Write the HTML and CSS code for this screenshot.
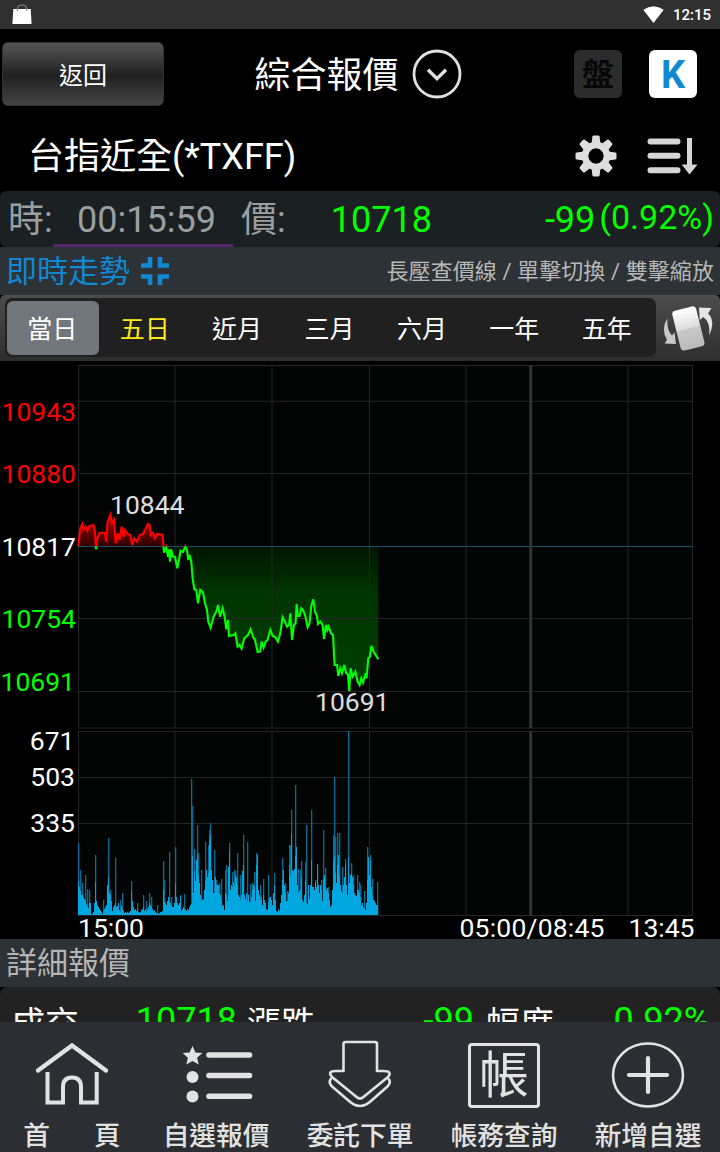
FILE: index.html
```html
<!DOCTYPE html>
<html lang="zh-Hant">
<head>
    <meta charset="UTF-8">
    <meta name="viewport" content="width=device-width, initial-scale=1.0">
    <title>綜合報價</title>
    <link rel="stylesheet" href="styles.css">
</head>
<body>
    <div class="status-bar">
        <svg width="20" height="21" viewBox="0 0 20 21"><path d="M1.300 5h17.400l.9 15H.4z" fill="#fff"/><path d="M5.300 7V4.500Q6 1 10 1t4.700 3.500V7" fill="none" stroke="#888" stroke-width="1.100"/></svg>
        <div class="status-right">
            <svg width="21" height="17" viewBox="0 0 21 17"><path d="M.3 3.700Q10.500-3.400 20.700 3.700L10.500 17z" fill="#fff"/></svg>
            <span>12:15</span>
        </div>
    </div>

    <header class="header">
        <button class="back-button">返回</button>
        <div class="page-title">
            <span>綜合報價</span>
            <svg width="50" height="50" viewBox="0 0 50 50" fill="none" stroke="#e0e0e0"><circle cx="25" cy="25" r="23" stroke-width="2.800"/><path d="M16 20.700l9 9 9-9" stroke-width="3.400"/></svg>
        </div>
        <div class="header-icons">
            <span class="badge badge-off">盤</span>
            <span class="badge badge-k">K</span>
        </div>
    </header>

    <div class="symbol-row">
        <span class="symbol-name">台指近全(*TXFF)</span>
        <div class="symbol-icons">
            <svg width="42" height="42" viewBox="-21 -21 42 42" fill="#dedede">
                <g id="gear-teeth">
                    <path id="tooth" d="M-4.500-12L-3.600-19.400Q-3.300-20.500-2-20.500H2Q3.300-20.500 3.600-19.400L4.500-12z"/>
                    <use href="#tooth" transform="rotate(45)"/>
                    <use href="#tooth" transform="rotate(90)"/>
                    <use href="#tooth" transform="rotate(135)"/>
                    <use href="#tooth" transform="rotate(180)"/>
                    <use href="#tooth" transform="rotate(225)"/>
                    <use href="#tooth" transform="rotate(270)"/>
                    <use href="#tooth" transform="rotate(315)"/>
                </g>
                <circle r="10.800" fill="none" stroke="#dedede" stroke-width="6.800"/>
                <circle r="7.600" fill="#000"/>
            </svg>
            <svg width="51" height="38" viewBox="0 0 51 38"><path d="M3.500 4.400h27M3.500 18.800h27M3.500 33.200h27" stroke="#d6d6d6" stroke-width="6" stroke-linecap="round"/><path d="M40 1h5v26.500h5.500L42.500 37.500 34.700 27.500H40z" fill="#d6d6d6"/></svg>
        </div>
    </div>

    <div class="quote-bar">
        <span class="quote-label">時:</span>
        <span class="quote-time">00:15:59</span>
        <span class="quote-label">價:</span>
        <span class="quote-price">10718</span>
        <span class="quote-change">-99</span>
        <span class="quote-percent">(0.92%)</span>
    </div>

    <div class="section-head">
        <span class="section-title section-title-blue">即時走勢</span>
        <svg class="shrink-icon" width="28" height="28" viewBox="0 0 28 28" fill="none" stroke="#1189d2" stroke-width="4.600"><path d="M9 0v8.500H0M19 0v8.500h9M9 28v-8.500H0M19 28v-8.500h9"/></svg>
        <span class="section-hint">長壓查價線 / 單擊切換 / 雙擊縮放</span>
    </div>

    <div class="tab-bar">
        <div class="tabs">
            <span class="tab tab-active">當日</span>
            <span class="tab tab-yellow">五日</span>
            <span class="tab">近月</span>
            <span class="tab">三月</span>
            <span class="tab">六月</span>
            <span class="tab">一年</span>
            <span class="tab">五年</span>
        </div>
        <svg class="rotate-icon" width="50" height="46" viewBox="0 0 50 46">
            <defs><linearGradient id="phone" x2="0" y2="1"><stop offset="0" stop-color="#fff"/><stop offset=".5" stop-color="#ddd"/><stop offset=".51" stop-color="#c8c8c8"/><stop offset="1" stop-color="#bbb"/></linearGradient></defs>
            <rect x="13" y="3" width="24.500" height="41" rx="3.500" fill="url(#phone)" transform="rotate(-14 25 23)"/>
            <path d="M4.500 13Q-2.500 24 4 35L1.500 38.500l11.500.5L11.500 27.500l-2.500 3Q3.500 25 4.500 13z" fill="#c8c8c8"/>
            <path d="M46 30.500q7-14.500-1-22l3.500-5.500L36 2.500l.8 12.500 3.500-3Q48 18 46 30.500z" fill="#e4e4e4"/>
        </svg>
    </div>

    <svg class="chart" id="chart" width="720" height="578" viewBox="0 361 720 578">
        <defs>
            <linearGradient id="up" gradientUnits="userSpaceOnUse" x1="0" y1="515" x2="0" y2="546"><stop offset="0" stop-color="#b00000"/><stop offset="1" stop-color="#300000"/></linearGradient>
            <linearGradient id="down" gradientUnits="userSpaceOnUse" x1="0" y1="546" x2="0" y2="690"><stop offset="0" stop-color="#001500"/><stop offset=".32" stop-color="#003400"/><stop offset="1" stop-color="#004000"/></linearGradient>
            <clipPath id="above"><rect x="77" y="365" width="615" height="181.500"/></clipPath>
            <clipPath id="below"><rect x="78" y="546.500" width="615" height="182"/></clipPath>
        </defs>
        <rect x="78" y="365" width="615" height="363" fill="#030504"/>
        <rect x="78" y="731" width="615" height="184" fill="#030504"/>
        <g id="fills"></g>
        <g class="grid">
            <path d="M78 365.500h615M78 401.300h615M78 473.500h615M78 618.500h615M78 691.500h615M78 728h615M78 731.500h615M78 777.500h615M78 823.500h615M78 915.500h615"/>
            <path d="M78.500 365v363M175 365v363M272 365v363M369.500 365v363M466 365v363M628 365v363M692.500 365v363"/>
            <path d="M78.500 731v184M175 731v184M272 731v184M369.500 731v184M466 731v184M628 731v184M692.500 731v184"/>
        </g>
        <path d="M78 546.500h615" stroke="#1c5066"/>
        <path d="M530.700 365v363M530.700 731v184" stroke="#333" stroke-width="3"/>
        <g id="lines"></g>
        <g id="volume"></g>
        <g class="axis-text" text-anchor="end">
            <text x="76" y="421" fill="#f00">10943</text>
            <text x="76" y="483" fill="#f00">10880</text>
            <text x="76" y="556">10817</text>
            <text x="76" y="628.400" fill="#0f0">10754</text>
            <text x="75" y="691.400" fill="#0f0">10691</text>
            <text x="74.500" y="750">671</text>
            <text x="75" y="786">503</text>
            <text x="75" y="832.400">335</text>
        </g>
        <g class="axis-text">
            <text x="110" y="514.400" fill="#ddd">10844</text>
            <text x="315" y="711.400" fill="#ddd">10691</text>
            <text x="78" y="937.400">15:00</text>
            <text x="459.500" y="937.400" textLength="145">05:00/08:45</text>
            <text x="628.500" y="937.400">13:45</text>
        </g>
    </svg>

    <div class="section-head detail-head">
        <span class="section-title">詳細報價</span>
    </div>
    <div class="detail">
        <div class="detail-row">
            <span class="detail-label">成交</span><span class="detail-value">10718</span>
            <span class="detail-label">漲跌</span><span class="detail-value">-99</span>
            <span class="detail-label">幅度</span><span class="detail-value">0.92%</span>
        </div>
    </div>

    <nav class="bottom-nav">
        <a class="nav-item">
            <svg width="76" height="72" viewBox="0 0 76 72" fill="none" stroke="#e2e2e2"><path d="M4 32.500L38 7.500 72 32.500" stroke-width="4.400" stroke-linecap="round"/><path d="M13.500 34v30.500h15.500V49q0-9.500 9-9.500t9 9.500v15.500H62.700V34" stroke-width="4"/></svg>
            <span class="nav-home">首頁</span>
        </a>
        <a class="nav-item">
            <svg width="76" height="72" viewBox="0 0 76 72" fill="#e2e2e2"><path d="M14.500 8l2.900 6.500 7 .6-5.300 4.600 1.600 6.800-6.200-3.600-6.200 3.600 1.600-6.800L4.600 15.100l7-.6z"/><circle cx="14.500" cy="39" r="6"/><circle cx="14.500" cy="58.500" r="6"/><path d="M31 17h40.500M31 37.500h40.500M31 58.300h40.500" stroke="#e2e2e2" stroke-width="5.600" stroke-linecap="round"/></svg>
            <span>自選報價</span>
        </a>
        <a class="nav-item">
            <svg width="76" height="72" viewBox="0 0 76 72" fill="none" stroke="#e2e2e2" stroke-width="2.600" stroke-linejoin="round"><path d="M21.500 33V6Q21.500 4 23.500 4H53q2 0 2 2V33h6q10 0 5 6L42 58.500q-4 4-8 0L10 39Q5 33 13.500 33z"/><path d="M9.500 40q-3.500 4 0 8L27 63q11 10 22 0L66 48q3.500-4 0-8"/></svg>
            <span>委託下單</span>
        </a>
        <a class="nav-item">
            <span class="account-icon">帳</span>
            <span>帳務查詢</span>
        </a>
        <a class="nav-item">
            <svg width="76" height="72" viewBox="0 0 76 72" fill="none" stroke="#e2e2e2"><ellipse cx="38" cy="37" rx="35" ry="31.500" stroke-width="2.600"/><path d="M19 37h38M38 20v34" stroke-width="4.200" stroke-linecap="round"/></svg>
            <span>新增自選</span>
        </a>
    </nav>
    <script src="chart.js"></script>
</body>
</html>
```
FILE: styles.css
```css
body {
    margin: 0;
    width: 720px;
    height: 1152px;
    overflow: hidden;
    display: flex;
    flex-direction: column;
    background-color: #000;
    color: #fff;
    font-family: Roboto, "Noto Sans CJK TC", sans-serif;
}
svg {
    display: block;
    flex: none;
}
.status-bar {
    height: 29px;
    flex: none;
    box-sizing: border-box;
    padding: 0 9px 0 12px;
    display: flex;
    align-items: center;
    justify-content: space-between;
    background-color: #303030;
}
.status-right {
    display: flex;
    align-items: center;
    gap: 9px;
    font-size: 15px;
    font-weight: 500;
}
.header {
    height: 92px;
    flex: none;
    display: grid;
    grid-template-columns: 252.5px 1fr 147px;
    padding: 0 0 0 2px;
    box-sizing: border-box;
}
.back-button {
    width: 162px;
    height: 64px;
    margin-top: 13px;
    padding: 0 0 1px;
    border: 1px solid #333;
    border-radius: 6px;
    background: linear-gradient(#555 0%, #3a3a3a 28%, #202020 52%, #444 100%);
    color: #fff;
    font-family: inherit;
    font-size: 24px;
}
.page-title {
    height: 90px;
    display: flex;
    align-items: center;
    gap: 13.5px;
    font-size: 36px;
}
.page-title span {
    padding-bottom: 4px;
}
.header-icons {
    display: flex;
    gap: 27px;
    padding-top: 21px;
    padding-left: 1px;
}
.badge {
    width: 48px;
    height: 48px;
    border-radius: 6px;
    display: flex;
    align-items: center;
    justify-content: center;
    font-weight: bold;
}
.badge-off {
    background-color: #2c2c2c;
    color: #080808;
    font-size: 32px;
    line-height: 50px;
    align-items: flex-start;
}
.badge-k {
    box-sizing: border-box;
    padding-top: 2px;
    background-color: #fff;
    color: #1189d2;
    font-size: 38px;
}
.symbol-row {
    height: 70px;
    flex: none;
    box-sizing: border-box;
    padding: 0 22px 0 28px;
    display: flex;
    align-items: center;
    justify-content: space-between;
    font-size: 36px;
}
.symbol-name {
    padding-bottom: 6px;
}
.symbol-icons {
    display: flex;
    align-items: center;
    gap: 30px;
}
.quote-bar {
    height: 56px;
    flex: none;
    display: flex;
    align-items: stretch;
    line-height: 58px;
    border-radius: 6px;
    background-color: #1b2023;
    font-size: 36px;
    color: #0f0;
    box-sizing: border-box;
    padding: 0 6px 0 8px;
}
.quote-label {
    width: 45px;
    color: #9a9fa2;
}
.quote-time {
    width: 180px;
    margin-right: 8px;
    box-sizing: border-box;
    padding-left: 7px;
    border-bottom: 3px solid #5c2468;
    text-align: center;
    color: #9a9fa2;
}
.quote-price {
    width: 146px;
    text-align: right;
}
.quote-change {
    flex: 1;
    text-align: right;
    margin-right: 4px;
}
.quote-percent {
    font-size: 34px;
    line-height: 53px;
}
.section-head {
    height: 48px;
    flex: none;
    box-sizing: border-box;
    padding: 0 6px;
    display: flex;
    align-items: center;
    background-color: #2d3236;
}
.section-title {
    padding-bottom: 5px;
    font-size: 31px;
    color: #b5b5b5;
}
.section-title-blue {
    color: #1189d2;
}
.shrink-icon {
    margin-left: 11px;
}
.section-hint {
    margin-left: auto;
    padding-bottom: 4px;
    font-size: 22px;
    letter-spacing: 0.08px;
    color: #b8b8b8;
}
.tab-bar {
    height: 66px;
    flex: none;
    box-sizing: border-box;
    padding: 3px 7px 4px 5px;
    display: flex;
    align-items: center;
    justify-content: space-between;
    border-radius: 5px 5px 0 0;
    background: linear-gradient(#4c4c4c, #2e2e2e);
}
.tabs {
    width: 651px;
    height: 59px;
    box-sizing: border-box;
    padding: 3px 2px 2px;
    display: flex;
    border-radius: 7px;
    background-color: #202020;
}
.tab {
    flex: 1;
    box-sizing: border-box;
    padding: 0 2px 3px 0;
    display: flex;
    align-items: center;
    justify-content: center;
    font-size: 25px;
    border-radius: 6px;
}
.tab-active {
    background-color: #70767b;
}
.tab-yellow {
    color: #ffeb1a;
}
.grid {
    fill: none;
    stroke: #242626;
    stroke-width: 1;
}
.axis-text {
    font-size: 26.5px;
    fill: #fff;
}
.detail {
    height: 35px;
    flex: none;
    overflow: hidden;
    border-radius: 7px 7px 0 0;
    background-color: #222;
}
.detail-row {
    height: 66px;
    line-height: 68px;
    padding: 0 10px 0 11px;
    display: grid;
    grid-template-columns: 69px 157px 10px 69px 158px 12px 69px 1fr;
    font-size: 34px;
}
.detail-label {
    padding-top: 3px;
}
.detail-label:nth-child(3) {
    grid-column: 4;
}
.detail-label:nth-child(5) {
    grid-column: 7;
}
.detail-value {
    text-align: right;
    font-size: 36px;
    color: #0f0;
}
.bottom-nav {
    height: 130px;
    flex: none;
    display: grid;
    grid-template-columns: repeat(5, 1fr);
    background-color: #2b2f33;
}
.nav-item {
    display: flex;
    flex-direction: column;
    align-items: center;
    padding-top: 16px;
    gap: 7px;
    color: #e2e2e2;
    font-size: 26.7px;
    font-weight: 500;
    line-height: 38px;
    white-space: nowrap;
}
.nav-home {
    margin-right: -44px;
    letter-spacing: 44px;
}
.account-icon {
    width: 72px;
    height: 65px;
    margin: 5px 0 2px;
    box-sizing: border-box;
    border: 3px solid #e2e2e2;
    border-radius: 4px;
    font-size: 50px;
    font-weight: 400;
    line-height: 60px;
    text-align: center;
}
```
FILE: chart.js
```js
var NS = 'http://www.w3.org/2000/svg';
var BASE = 546.3;
var BOTTOM = 915;

// x / y pairs of the price line, three units to a pixel
var price = [
    234,558, 240,505, 246,492, 250,510, 256,500, 262,512, 268,498, 280,496, 284,515, 287,568, 291,535, 298,518,
    314,518, 317,545, 322,485, 331,463, 335,490, 341,480, 346,550, 352,520, 358,540, 364,500, 370,530, 374,510,
    382,522, 390,525, 396,555, 402,535, 410,545, 418,525, 428,522, 435,508, 443,492, 448,495, 452,525, 458,518,
    464,535, 470,522, 487,525, 491,578, 498,562, 503,590, 506,568, 509,605, 512,568, 518,590, 524,590, 531,625,
    536,600, 541,572, 548,576, 555,559, 560,570, 564,600, 568,585, 573,605, 577,655, 582,688, 588,690, 593,730,
    600,690, 608,697, 614,730, 620,750, 624,785, 631,803, 640,770, 648,755, 653,735, 659,770, 667,745, 673,770,
    678,808, 683,780, 686,828, 700,825, 705,820, 712,860, 718,855, 724,866, 732,835, 743,825, 751,808, 758,830,
    764,840, 772,876, 780,874, 784,845, 790,863, 796,845, 802,840, 810,810, 817,828, 825,832, 833,845, 840,820,
    847,772, 854,785, 860,800, 866,795, 870,760, 875,840, 881,795, 886,790, 889,732, 893,768, 898,768, 903,745,
    908,750, 915,768, 922,802, 928,790, 933,738, 939,718, 944,755, 950,768, 953,792, 960,785, 967,795, 971,837,
    977,795, 981,810, 985,800, 992,820, 998,825, 1003,915, 1010,915, 1014,948, 1020,925, 1025,940, 1032,915,
    1037,938, 1043,945, 1047,994, 1051,925, 1057,950, 1065,935, 1072,965, 1078,975, 1083,955, 1088,968,
    1096,940, 1099,955, 1104,895, 1109,890, 1113,858, 1120,875, 1126,885, 1134,898
];

// one height per pixel column, starting at x = 78
var volume = [
    34,28,24,20,21,18,16,14,11,9,7,12,12,1,1,3,12,33,14,10,8,6,5,3,1,4,6,8,10,30,
    38,22,20,14,4,8,10,12,8,9,12,5,3,9,6,4,2,3,2,3,2,3,4,24,14,8,5,6,4,6,
    3,2,3,5,6,8,4,6,3,6,8,12,10,8,6,4,5,3,2,2,1,2,3,3,4,25,14,12,10,14,
    18,14,12,10,8,8,12,32,18,12,10,12,19,4,6,8,6,5,4,6,5,8,10,11,59,22,44,34,55,60,
    40,32,20,15,15,16,25,34,45,38,42,75,80,45,35,22,22,38,30,30,30,22,20,15,9,10,5,22,20,14,
    48,64,25,30,28,33,30,40,38,30,20,18,15,20,44,50,20,16,22,14,20,13,13,18,25,30,28,14,50,60,
    25,20,15,18,10,20,15,12,6,5,12,17,18,15,10,22,30,15,4,3,6,4,12,20,35,45,30,22,14,14,
    22,50,40,81,45,44,46,59,68,30,22,24,25,38,15,13,20,35,12,11,30,16,30,55,28,28,25,33,28,50,
    30,22,30,26,14,36,40,28,25,27,22,15,8,10,25,54,59,42,32,50,60,40,30,24,22,30,38,50,30,20,
    58,32,40,42,38,30,22,20,19,25,25,22,18,10,12,8,6,5,12,35,58,40,55,28,20,15,14,12,10,10
];

var spikes = [
    [78,72],[80,45],[82,32],[85,40],[87,26],[89,25],[95,60],[103,15],[108,77],[110,25],[115,57],[120,15],[122,22],
    [131,34],[137,12],[143,20],[146,14],[149,22],[151,18],[157,10],[163,54],[164,35],[169,63],[171,18],[175,68],
    [180,20],[184,21],[191,136],[192,109],[194,66],[197,90],[198,62],[201,45],[205,73],[208,70],[209,85],[210,92],
    [214,65],[216,35],[219,32],[221,36],[225,45],[226,50],[229,72],[232,43],[234,45],[235,44],[237,62],[240,40],
    [243,80],[247,73],[250,31],[252,32],[254,43],[256,62],[260,30],[263,36],[268,40],[274,42],[282,57],[285,32],
    [287,24],[289,70],[290,70],[291,105],[295,130],[298,46],[300,45],[301,54],[305,53],[306,90],[311,105],[315,35],
    [317,51],[321,35],[323,85],[325,47],[328,28],[333,80],[334,138],[335,78],[337,82],[339,82],[342,48],[345,56],
    [348,184],[351,52],[353,40],[357,40],[359,33],[360,30],[364,24],[367,68],[370,60],[372,36],[377,33]
];

function add(parent, d, attrs) {
    var path = document.createElementNS(NS, 'path');
    path.setAttribute('d', d);
    for (var key in attrs) {
        path.setAttribute(key, attrs[key]);
    }
    document.getElementById(parent).appendChild(path);
}

var points = [];
for (var i = 0; i < price.length; i += 2) {
    points.push((price[i] / 3 + 0.3).toFixed(1) + ' ' + (360 + price[i + 1] / 3).toFixed(1));
}
var line = 'M' + points.join('L');
var area = line + 'V' + BASE + 'H78z';

add('fills', area, {fill: 'url(#up)', 'clip-path': 'url(#above)'});
add('fills', area, {fill: 'url(#down)', 'clip-path': 'url(#below)'});
add('lines', line, {fill: 'none', stroke: '#f00', 'stroke-width': 2.1, 'clip-path': 'url(#above)'});
add('lines', line, {fill: 'none', stroke: '#0f0', 'stroke-width': 2.1, 'clip-path': 'url(#below)'});

var dark = '';
spikes.forEach(function (s) {
    dark += 'M' + s[0] + ' ' + BOTTOM + 'v-' + s[1] + 'h1.3v' + s[1] + 'z';
});
var solid = '';
volume.forEach(function (h, n) {
    solid += 'M' + (78 + n) + ' ' + BOTTOM + 'v-' + h + 'h1v' + h + 'z';
});
add('volume', dark, {fill: '#006f98'});
add('volume', solid, {fill: '#00a6e0'});
```
